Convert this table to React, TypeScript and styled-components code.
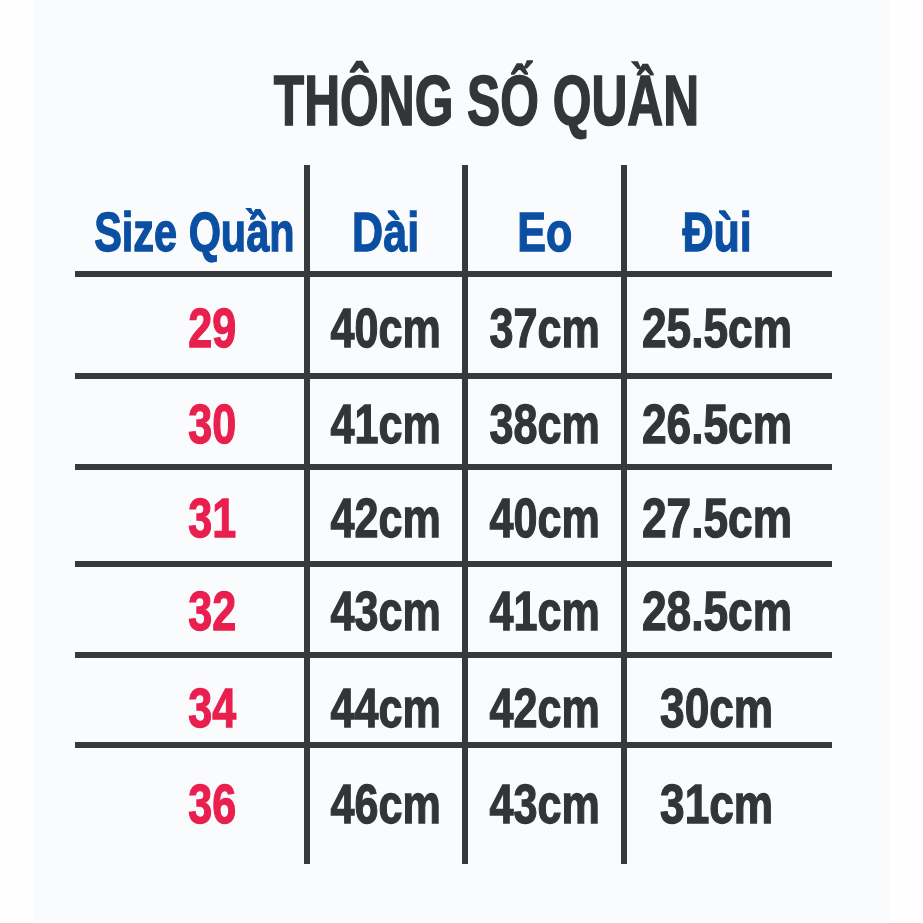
import React from "react";
import styled, { createGlobalStyle } from "styled-components";

const GlobalStyle = createGlobalStyle`
  html, body {
    margin: 0;
    padding: 0;
    background: #fefefe;
  }
`;

type rowData = {
  size: string;
  dai: string;
  eo: string;
  dui: string;
  height: number;
  offset: number;
};

const rows: rowData[] = [
  { size: "29", dai: "40cm", eo: "37cm", dui: "25.5cm", height: 102, offset: 23 },
  { size: "30", dai: "41cm", eo: "38cm", dui: "26.5cm", height: 91, offset: 17 },
  { size: "31", dai: "42cm", eo: "40cm", dui: "27.5cm", height: 97, offset: 20 },
  { size: "32", dai: "43cm", eo: "41cm", dui: "28.5cm", height: 91, offset: 16 },
  { size: "34", dai: "44cm", eo: "42cm", dui: "30cm", height: 90, offset: 22 },
  { size: "36", dai: "46cm", eo: "43cm", dui: "31cm", height: 122, offset: 28 },
];

const Page = styled.div`
  width: 923px;
  height: 923px;
  display: flex;
  font-family: "Liberation Sans", Arial, sans-serif;
  font-weight: bold;
`;

const Panel = styled.div`
  margin-left: 34px;
  width: 855px;
  height: 923px;
  background: #f9fbfd;
  display: flex;
  flex-direction: column;
`;

const Title = styled.div`
  margin-top: 66px;
  padding-left: 49px;
  display: flex;
  justify-content: center;
  font-size: 70px;
  line-height: 1;
  color: #343539;
  -webkit-text-stroke: 1.6px currentColor;
`;

// condensed face: the source uses a narrow grotesque we don't have
const Narrow = styled.span<{ $scale: number }>`
  display: inline-block;
  white-space: nowrap;
  transform: scaleX(${(p) => p.$scale});
  transform-origin: center;
`;

const Table = styled.div`
  margin-top: 29px;
  margin-left: 41px;
  width: 757px;
  display: flex;
  flex-direction: column;
`;

const Row = styled.div<{ $height: number; $first?: boolean }>`
  display: grid;
  grid-template-columns: 229px 158px 159px 211px;
  height: ${(p) => p.$height}px;
  box-sizing: border-box;
  border-top: ${(p) => (p.$first ? "none" : "6px solid #38393d")};
`;

const Cell = styled.div<{ $offset: number; $color: string; $line?: boolean; $padL?: number; $padR?: number }>`
  box-sizing: border-box;
  display: flex;
  justify-content: center;
  align-items: flex-start;
  padding-top: ${(p) => p.$offset}px;
  padding-left: ${(p) => p.$padL || 0}px;
  padding-right: ${(p) => p.$padR || 0}px;
  border-left: ${(p) => (p.$line ? "6px solid #38393d" : "none")};
  font-size: 56px;
  line-height: 1;
  color: ${(p) => p.$color};
  -webkit-text-stroke: 1.3px currentColor;
  min-width: 0;
`;

const BLUE = "#0b4fa3";
const RED = "#e91f4e";
const DARK = "#333438";
const S = 0.77;

const App: () => JSX.Element = () => {
  return (
    <Page>
      <GlobalStyle />
      <Panel>
        <Title>
          <Narrow $scale={0.71}>THÔNG SỐ QUẦN</Narrow>
        </Title>
        <Table>
          <Row $height={106} $first>
            <Cell $offset={39} $color={BLUE} $padL={10}>
              <Narrow $scale={0.74}>Size Quần</Narrow>
            </Cell>
            <Cell $offset={39} $color={BLUE} $line>
              <Narrow $scale={S}>Dài</Narrow>
            </Cell>
            <Cell $offset={39} $color={BLUE} $line>
              <Narrow $scale={S}>Eo</Narrow>
            </Cell>
            <Cell $offset={39} $color={BLUE} $line $padR={25}>
              <Narrow $scale={S}>Đùi</Narrow>
            </Cell>
          </Row>
          {rows.map((r) => (
            <Row key={r.size} $height={r.height}>
              <Cell $offset={r.offset} $color={RED} $padL={45}>
                <Narrow $scale={S}>{r.size}</Narrow>
              </Cell>
              <Cell $offset={r.offset} $color={DARK} $line>
                <Narrow $scale={S}>{r.dai}</Narrow>
              </Cell>
              <Cell $offset={r.offset} $color={DARK} $line>
                <Narrow $scale={S}>{r.eo}</Narrow>
              </Cell>
              <Cell $offset={r.offset} $color={DARK} $line $padR={25}>
                <Narrow $scale={0.79}>{r.dui}</Narrow>
              </Cell>
            </Row>
          ))}
        </Table>
      </Panel>
    </Page>
  );
};

export default App;
